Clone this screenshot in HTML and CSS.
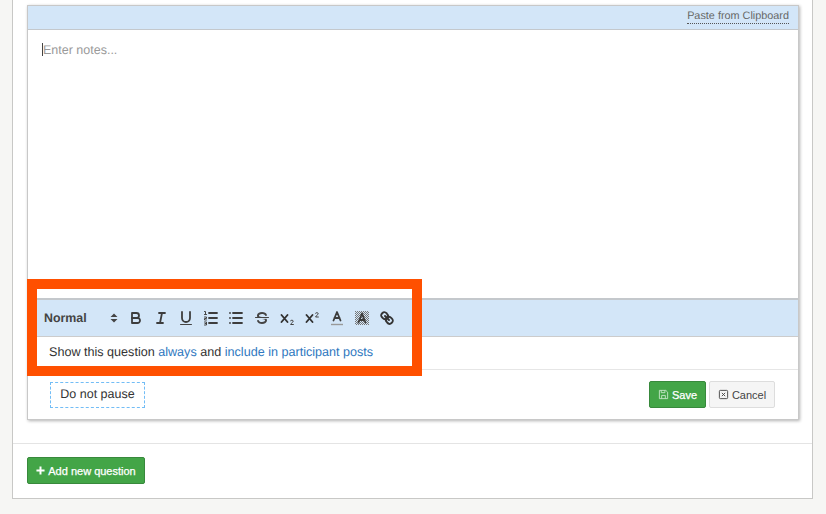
FILE: index.html
```html
<!DOCTYPE html>
<html lang="en">
<head>
<meta charset="utf-8">
<title>Question editor</title>
<link rel="stylesheet" href="styles.css">
</head>
<body>
<main class="panel">
  <section class="list">
    <article class="card">
      <div class="clip-bar"><a class="clip-link">Paste from Clipboard</a></div>
      <div class="editor"><span class="caret"></span><span class="placeholder">Enter notes...</span></div>
      <div class="toolbar">
        <div class="picker"><span class="picker-label">Normal</span>
          <svg class="updown" viewBox="0 0 8 10"><path d="M4 0.5 7.5 4H0.5Z M4 9.5 0.5 6H7.5Z"/></svg>
        </div>
        <button class="tool"><svg viewBox="0 0 18 18"><path class="s" d="M5,4H9.5A2.5,2.5,0,0,1,12,6.5v0A2.5,2.5,0,0,1,9.5,9H5V4Z"/><path class="s" d="M5,9h5.5A2.5,2.5,0,0,1,13,11.5v0A2.5,2.5,0,0,1,10.5,14H5V9Z"/></svg></button>
        <button class="tool"><svg viewBox="0 0 18 18"><path class="s" d="M7 4H13M5 14H11M8 14 10 4"/></svg></button>
        <button class="tool"><svg viewBox="0 0 18 18"><path class="s" d="M5,3V9a4,4,0,0,0,4,4a4,4,0,0,0,4-4V3"/><rect class="f" x="3" y="15" width="12" height="1" rx=".5"/></svg></button>
        <button class="tool"><svg viewBox="0 0 18 18"><path class="s" d="M7 4H15M7 9H15M7 14H15"/><path class="t" d="M2.5 2.5H3.5V5.5M2.5 5.5H4.5M2.5 8H4.5V9.5H2.5V11H4.5M2.5 13H4.5V16H2.5M3 14.5H4.5"/></svg></button>
        <button class="tool"><svg viewBox="0 0 18 18"><path class="s" d="M6 4H15M6 9H15M6 14H15M3 4H3.01M3 9H3.01M3 14H3.01"/></svg></button>
        <button class="tool"><svg viewBox="0 0 18 18"><path class="t" d="M15.5 8.5H2.5"/><path class="f" d="M9.007,8C6.542,7.791,6,7.519,6,6.5,6,5.792,7.283,5,9,5c1.571,0,2.765.679,2.969,1.309a1,1,0,0,0,1.9-.617C13.356,4.106,11.354,3,9,3,6.215,3,4,4.538,4,6.5a3.2,3.2,0,0,0,.5,1.843Z"/><path class="f" d="M8.984,10C11.457,10.208,12,10.479,12,11.5c0,.708-1.283,1.5-3,1.5-1.571,0-2.765-.679-2.969-1.309a1,1,0,1,0-1.9.617C4.644,13.894,6.646,15,9,15c2.785,0,5-1.538,5-3.5a3.2,3.2,0,0,0-.5-1.843Z"/></svg></button>
        <button class="tool"><svg viewBox="0 0 18 18"><path class="x" d="M3.5 6 9.5 13M9.5 6 3.5 13"/><path class="t" d="M12.5 11.7C13 10.9 15.2 10.9 15.2 12.2C15.2 13.3 13 14 12.6 15.5H15.4"/></svg></button>
        <button class="tool"><svg viewBox="0 0 18 18"><path class="x" d="M3.5 6 9.5 13M9.5 6 3.5 13"/><path class="t" d="M12.5 4.2C13 3.4 15.2 3.4 15.2 4.7C15.2 5.8 13 6.5 12.6 8H15.4"/></svg></button>
        <button class="tool"><svg viewBox="0 0 18 18"><path class="u" d="M3 15.5H15"/><path class="s" d="M5.5 11.5 9 3 12.5 11.5M6.4 9H11.6"/></svg></button>
        <button class="tool"><svg viewBox="0 0 18 18"><defs><pattern id="dither" width="2" height="2" patternUnits="userSpaceOnUse"><rect class="d" width="1" height="1"/><rect class="d" x="1" y="1" width="1" height="1"/></pattern></defs><rect x="2" y="2" width="14" height="14" fill="url(#dither)"/><path class="s" d="M5.5 13.5 9 4.5 12.5 13.5M6.4 11H11.6"/></svg></button>
        <button class="tool"><svg viewBox="0 0 18 18"><path class="x" d="M7 7 11 11"/><path class="x" d="M8.9,4.577a3.476,3.476,0,0,1,.36,4.679A3.476,3.476,0,0,1,4.577,8.9C3.185,7.5,2.035,6.4,4.217,4.217S7.5,3.185,8.9,4.577Z"/><path class="x" d="M13.423,9.1a3.476,3.476,0,0,0-4.679-.36,3.476,3.476,0,0,0,.36,4.679c1.392,1.392,2.5,2.542,4.679.36S14.815,10.5,13.423,9.1Z"/></svg></button>
      </div>
      <p class="visibility">Show this question <a>always</a> and <a>include in participant posts</a></p>
      <footer class="card-foot">
        <span class="pause">Do not pause</span>
        <div class="actions">
          <button class="btn btn-save"><svg class="btn-icon" viewBox="0 0 12 12"><path d="M1.5 1.5H8.5L10.5 3.5V10.5H1.5ZM3.5 1.5V4H7.5V1.5M4 10.5V7H8V10.5"/></svg>Save</button>
          <button class="btn btn-cancel"><svg class="btn-icon" viewBox="0 0 12 12"><rect x="1.5" y="1.5" width="9" height="9" rx="1"/><path d="M4.2 4.2 7.8 7.8M7.8 4.2 4.2 7.8"/></svg>Cancel</button>
        </div>
      </footer>
      <div class="highlight"></div>
    </article>
  </section>
  <div class="panel-foot">
    <button class="btn btn-add"><svg class="plus" viewBox="0 0 10 10"><path d="M5 0.5V9.5M0.5 5H9.5"/></svg>Add new question</button>
  </div>
</main>
</body>
</html>
```
FILE: styles.css
```css
* { box-sizing: border-box; }
html, body { margin: 0; height: 100%; }
body {
  background: #f6f6f4;
  font-family: "Liberation Sans", Arial, sans-serif;
  color: #333;
  overflow: hidden;
  padding: 0 13px 15px 12px;
  text-rendering: geometricPrecision;
}
.panel {
  height: 499px;
  background: #fff;
  border: 1px solid #c8c8c6;
  border-top: 0;
  display: flex;
  flex-direction: column;
}
.list {
  padding: 5px 13px 0 14px;
  height: 444px;
  border-bottom: 1px solid #e4e4e4;
  flex: none;
}
.card {
  position: relative;
  height: 415px;
  border: 1px solid #c8c8c8;
  box-shadow: 1px 1px 3px rgba(0, 0, 0, .3);
  display: flex;
  flex-direction: column;
  background: #fff;
}
.clip-bar {
  height: 24px;
  background: #d3e6f8;
  border-bottom: 1px solid #c4c8cc;
  display: flex;
  justify-content: flex-end;
  align-items: center;
  padding-right: 9px;
  flex: none;
}
.clip-link {
  font-size: 10.85px;
  line-height: 13px;
  color: #666;
  border-bottom: 1px dotted #555;
  position: relative;
  top: -1px;
}
.editor {
  height: 268px;
  flex: none;
  padding: 13px 14px 0;
  display: flex;
  align-items: flex-start;
  font-size: 12.5px;
  line-height: 15px;
}
.caret { width: 1px; height: 13px; background: #444; margin-top: 0; }
.placeholder { color: #9a9a9a; }
.toolbar {
  height: 39px;
  flex: none;
  background: #d3e6f8;
  border-top: 2px solid #c4c8cc;
  border-bottom: 1px solid #ccc;
  display: flex;
  align-items: center;
  padding-left: 16px;
}
.picker {
  width: 79px;
  display: flex;
  align-items: center;
  justify-content: space-between;
  padding-right: 5px;
}
.picker-label { font-size: 12.4px; font-weight: 700; color: #444; }
.updown { width: 8px; height: 10px; fill: #444; }
.tool {
  width: 25.2px;
  height: 20px;
  padding: 0;
  border: 0;
  background: none;
  display: flex;
  align-items: center;
  justify-content: center;
  flex: none;
}
.tool svg { width: 18px; height: 18px; flex: none; }
.s { fill: none; stroke: #3d3d3d; stroke-width: 1.8; stroke-linecap: round; stroke-linejoin: round; }
.x { fill: none; stroke: #333; stroke-width: 1.9; stroke-linecap: round; stroke-linejoin: round; }
.t { fill: none; stroke: #444; stroke-width: 1; stroke-linecap: round; stroke-linejoin: round; }
.u { fill: none; stroke: #999; stroke-width: 1.4; }
.f { fill: #444; }
.d { fill: #777; }
.visibility {
  height: 33px;
  margin: 0;
  flex: none;
  padding: 0 0 0 21px;
  font-size: 12.6px;
  line-height: 31px;
  border-bottom: 1px solid #e6e6e6;
}
.visibility a { color: #2f78c0; }
.card-foot {
  flex: 1;
  display: flex;
  justify-content: space-between;
  padding: 12px 23px 0 22px;
  align-items: flex-start;
}
.pause {
  width: 95px;
  height: 26px;
  border: 1px dashed #72bdf6;
  font-size: 12.5px;
  line-height: 22px;
  text-align: center;
}
.actions { display: flex; gap: 3px; margin-top: -1px; }
.btn {
  height: 27px;
  font-family: inherit;
  font-size: 11px;
  border-radius: 2px;
  padding: 0;
  display: flex;
  align-items: center;
  justify-content: center;
}
.btn-save {
  width: 57px;
  background: #43a547;
  border: 1px solid #38893c;
  color: #fff;
  -webkit-text-stroke: .25px #fff;
}
.btn-cancel {
  width: 66px;
  background: #f5f5f5;
  border: 1px solid #ddd;
  color: #444;
}
.btn-icon { width: 11px; height: 11px; margin-right: 3px; fill: none; stroke-width: 1; }
.btn-save .btn-icon { stroke: #c5e6c7; }
.btn-cancel .btn-icon { stroke: #444; }
.highlight {
  position: absolute;
  left: -1px;
  top: 273px;
  width: 395px;
  height: 97px;
  border: 10px solid #ff5000;
  pointer-events: none;
}
.panel-foot { padding: 13px 14px; }
.btn-add {
  width: 118px;
  background: #43a547;
  border: 1px solid #38893c;
  color: #fff;
  -webkit-text-stroke: .25px #fff;
}
.plus { width: 9px; height: 9px; margin-right: 3px; fill: none; stroke: #fff; stroke-width: 2.2; }
```
